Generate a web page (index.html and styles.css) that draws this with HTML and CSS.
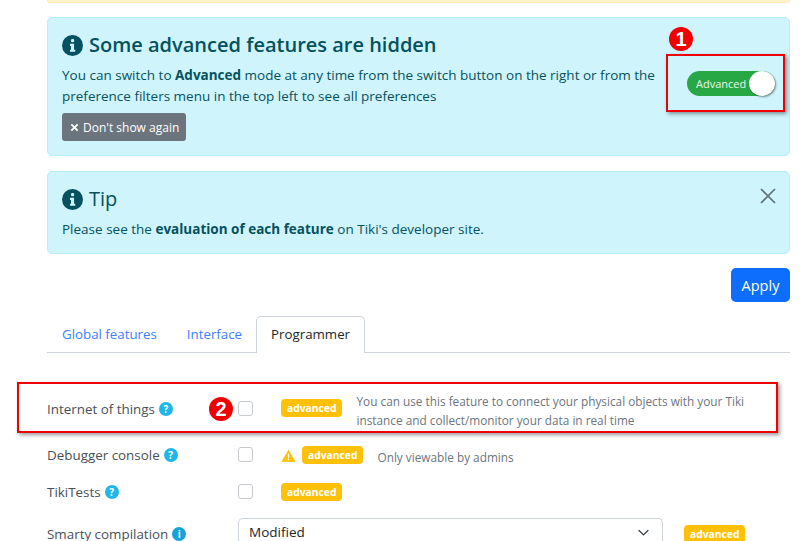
FILE: index.html
```html
<!DOCTYPE html>
<html lang="en">
<head>
<meta charset="utf-8">
<title>Preferences</title>
<link rel="stylesheet" href="styles.css">
</head>
<body>
<main class="page">
  <div class="alert-top"></div>

  <section class="alert alert-first">
    <div class="alert-main">
      <h2 class="alert-title">
        <svg class="info" viewBox="0 0 20 20"><circle cx="10" cy="10" r="10" fill="#055160"/><rect x="8.6" y="3.8" width="3" height="3" rx="1.2" fill="#cff4fc"/><path d="M7.6 8.4h3.9v5.6h1.1v2H7.6v-2h1v-3.6h-1z" fill="#cff4fc"/></svg>
        Some advanced features are hidden
      </h2>
      <p class="alert-text">You can switch to <b>Advanced</b> mode at any time from the switch button on the right or from the preference filters menu in the top left to see all preferences</p>
      <button class="btn-gray"><svg class="x-small" viewBox="0 0 10 10"><path d="M1.5 1.5l7 7M8.5 1.5l-7 7" stroke="#fff" stroke-width="2"/></svg> Don't show again</button>
    </div>
    <div class="switch-wrap">
      <div class="switch"><span class="switch-label">Advanced</span><span class="switch-knob"></span></div>
    </div>
  </section>

  <section class="alert alert-second">
    <div class="alert-main">
      <h2 class="alert-title">
        <svg class="info" viewBox="0 0 20 20"><circle cx="10" cy="10" r="10" fill="#055160"/><rect x="8.6" y="3.8" width="3" height="3" rx="1.2" fill="#cff4fc"/><path d="M7.6 8.4h3.9v5.6h1.1v2H7.6v-2h1v-3.6h-1z" fill="#cff4fc"/></svg>
        Tip
      </h2>
      <p class="alert-text">Please see the <b>evaluation of each feature</b> on Tiki's developer site.</p>
    </div>
    <svg class="close" viewBox="0 0 16 16"><path d="M1 1l14 14M15 1L1 15" stroke="#5f7378" stroke-width="1.7"/></svg>
  </section>

  <div class="actions"><button class="btn-apply">Apply</button></div>

  <nav class="tabs">
    <a class="tab">Global features</a>
    <a class="tab tab-interface">Interface</a>
    <a class="tab tab-active">Programmer</a>
  </nav>

  <div class="rows">
    <div class="row row-iot">
      <div class="label">Internet of things <span class="help">?</span></div>
      <span class="check"></span>
      <div class="content"><span class="badge">advanced</span><span class="desc desc-long">You can use this feature to connect your physical objects with your Tiki instance and collect/monitor your data in real time</span></div>
    </div>
    <div class="row row-debug">
      <div class="label">Debugger console <span class="help">?</span></div>
      <span class="check"></span>
      <div class="content"><svg class="warn" viewBox="0 0 16 14"><path d="M8 .5L15.6 13.5H.4z" fill="#ffc107" stroke="#ffc107" stroke-linejoin="round"/><path d="M7.2 4.5h1.6l-.2 5H7.4z" fill="#fff"/><circle cx="8" cy="11.2" r=".9" fill="#fff"/></svg><span class="badge">advanced</span><span class="desc">Only viewable by admins</span></div>
    </div>
    <div class="row row-tests">
      <div class="label">TikiTests <span class="help">?</span></div>
      <span class="check"></span>
      <div class="content"><span class="badge">advanced</span></div>
    </div>
    <div class="row row-smarty">
      <div class="label">Smarty compilation <span class="help help-info">i</span></div>
      <div class="select">Modified<svg class="chev" viewBox="0 0 16 16"><path d="M2.5 5.5L8 11l5.500-5.500" fill="none" stroke="#343a40" stroke-width="1.500" stroke-linecap="round" stroke-linejoin="round"/></svg></div>
      <span class="badge">advanced</span>
    </div>
  </div>

  <div class="mark mark-one"></div>
  <div class="mark mark-two"></div>
  <span class="num num-one">1</span>
  <span class="num num-two">2</span>
</main>
</body>
</html>
```

FILE: styles.css
```css
* { box-sizing: border-box; }
html, body { margin: 0; padding: 0; height: 100%; overflow: hidden; background: #fff; }
body { font-family: "Open Sans", "Noto Sans", sans-serif; font-size: 13.5px; color: #212529; }
.page { position: relative; width: 800px; height: 541px; padding: 0 10px 0 47px; overflow: hidden; }

.alert-top { height: 3px; background: #fff3cd; border: 1px solid #ffecb5; border-top: 0; border-radius: 0 0 5px 5px; margin-bottom: 14px; }
.alert { display: flex; background: #cff4fc; border: 1px solid #b6effb; border-radius: 5px; color: #055160; padding: 13px 14px; }
.alert-first { height: 139px; margin-bottom: 15px; }
.alert-second { height: 83px; justify-content: space-between; }
.alert-main { flex: 1; min-width: 0; }
.alert-title { display: flex; align-items: center; gap: 6px; margin: 1px 0 7px; font-size: 20px; line-height: 26px; font-weight: 600; }
.alert-second .alert-title { font-weight: 500; }
.info { width: 21px; height: 21px; flex: none; }
.alert-text { margin: 0 0 6px; font-size: 13.5px; line-height: 21px; width: 600px; }
.alert-text b { font-weight: 700; }
.btn-gray { display: flex; align-items: center; gap: 4px; height: 28px; padding: 0 7px 0 8px; background: #6c757d; border: 0; border-radius: 3px; color: #fff; font: inherit; font-size: 12px; }
.x-small { width: 9px; height: 9px; }

.switch-wrap { width: 103px; padding: 40px 0 0 15px; }
.switch { position: relative; width: 88px; height: 25px; background: #28a745; border-radius: 13px; color: #e8f7ec; font-size: 11px; line-height: 25px; padding-left: 9px; white-space: nowrap; }
.switch-knob { position: absolute; right: 0; top: 0; width: 26px; height: 25px; background: #fff; border-radius: 50%; box-shadow: 1px 1px 2px rgba(0,0,0,.45); }

.close { width: 16px; height: 16px; margin-top: 3px; margin-right: -1px; }

.actions { display: flex; justify-content: flex-end; margin-top: 14px; margin-bottom: 14px; }
.btn-apply { width: 59px; height: 34px; background: #0d6efd; border: 0; border-radius: 5px; color: #fff; font: inherit; font-size: 14.5px; }

.tabs { display: flex; height: 37px; border-bottom: 1px solid #ced4da; }
.tab { padding: 8px 15px 0; color: #3d7efd; font-size: 13.3px; line-height: 21px; }
.tab-interface { padding-right: 14px; }
.tab-active { color: #212529; background: #fff; border: 1px solid #ced4da; border-bottom: 0; border-radius: 5px 5px 0 0; height: 37px; padding: 7px 14px 0; }

.rows { display: flex; flex-direction: column; color: #495057; }
.row { display: grid; grid-template-columns: 191px 43px 1fr; align-items: start; }
.row-iot { margin-top: 46px; height: 46px; }
.row-debug { height: 37px; }
.row-tests { height: 42px; }
.row-smarty { grid-template-columns: 191px 446px auto; }
.label { display: flex; align-items: center; gap: 4px; height: 20px; font-size: 13.4px; white-space: nowrap; }
.help { display: inline-flex; align-items: center; justify-content: center; width: 14px; height: 14px; border-radius: 50%; background: #1fb6e8; color: #fff; font-size: 10px; font-weight: 700; }
.help-info { background: #17a2d8; }
.check { width: 15px; height: 15px; border: 1px solid #c6cacf; border-radius: 3px; margin-top: 2px; background: #fff; }
.content { display: flex; align-items: flex-start; }
.badge { display: inline-block; justify-self: start; height: 18px; padding: 0 6px; background: #ffc107; border-radius: 4px; color: #fff; font-size: 10.3px; font-weight: 700; line-height: 18px; flex: none; }
.row-debug .badge, .row-tests .badge, .row-smarty .badge { margin-top: 1px; }
.desc { font-size: 11.8px; line-height: 18.5px; color: #6c757d; margin-left: 14px; }
.desc-long { width: 400px; margin-top: -7px; }
.row-debug .desc { margin-top: 3px; }
.warn { width: 15px; height: 12px; margin: 5px 6px 0 0; flex: none; }
.select { display: flex; align-items: center; justify-content: space-between; width: 425px; height: 27px; margin-top: -6px; padding: 0 12px 0 10px; border: 1px solid #ced4da; border-bottom: 0; border-radius: 5px 5px 0 0; font-size: 13.5px; color: #212529; }
.chev { width: 13px; height: 13px; }

.mark { position: absolute; border: 2px solid #f00000; box-shadow: 2px 2px 4px rgba(0,0,0,.4); }
.mark-one { left: 666px; top: 54px; width: 119px; height: 58px; }
.mark-two { left: 17px; top: 382px; width: 761px; height: 51px; }
.num { position: absolute; width: 24px; height: 24px; border-radius: 50%; background: #f00000; color: #fff; font-family: "Liberation Sans", sans-serif; font-size: 20px; font-weight: 700; line-height: 24px; text-align: center; }
.num-one { left: 669px; top: 27px; }
.num-two { left: 209px; top: 397px; }
```
